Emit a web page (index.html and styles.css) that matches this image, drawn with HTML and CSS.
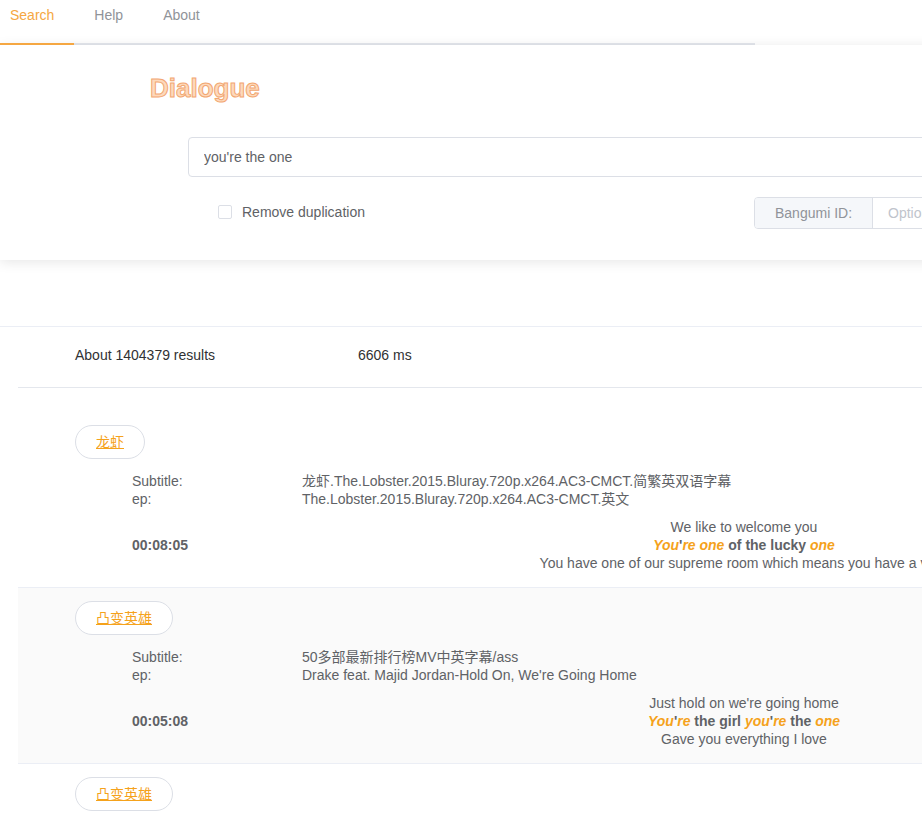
FILE: index.html
```html
<!DOCTYPE html>
<html lang="en">
<head>
  <meta charset="UTF-8">
  <title>Dialogue</title>
  <link rel="stylesheet" href="styles.css">
</head>
<body>
<div class="page">

  <nav class="tabs">
    <a class="tab active">Search</a>
    <a class="tab">Help</a>
    <a class="tab">About</a>
  </nav>

  <section class="search-card">
    <h1 class="brand">Dialogue</h1>
    <input class="query" type="text" value="you're the one">
    <div class="options">
      <label class="check"><span class="box"></span>Remove duplication</label>
      <div class="bangumi">
        <span class="prefix">Bangumi ID:</span>
        <input type="text" placeholder="Optional">
      </div>
    </div>
  </section>

  <section class="results">
    <div class="stats">
      <span class="count">About 1404379 results</span>
      <span class="time">6606 ms</span>
    </div>

    <article class="result">
      <a class="title">龙虾</a>
      <div class="info">
        <span>Subtitle:</span><span>龙虾.The.Lobster.2015.Bluray.720p.x264.AC3-CMCT.简繁英双语字幕</span>
        <span>ep:</span><span>The.Lobster.2015.Bluray.720p.x264.AC3-CMCT.英文</span>
      </div>
      <div class="line">
        <span class="stamp">00:08:05</span>
        <div class="dialogue">
          <p>We like to welcome you</p>
          <p class="hit"><em>You</em>'<em>re</em> <em>one</em> of the lucky <em>one</em></p>
          <p>You have one of our supreme room which means you have a view</p>
        </div>
      </div>
    </article>

    <article class="result odd">
      <a class="title">凸变英雄</a>
      <div class="info">
        <span>Subtitle:</span><span>50多部最新排行榜MV中英字幕/ass</span>
        <span>ep:</span><span>Drake feat. Majid Jordan-Hold On, We're Going Home</span>
      </div>
      <div class="line">
        <span class="stamp">00:05:08</span>
        <div class="dialogue">
          <p>Just hold on we're going home</p>
          <p class="hit"><em>You</em>'<em>re</em> the girl <em>you</em>'<em>re</em> the <em>one</em></p>
          <p>Gave you everything I love</p>
        </div>
      </div>
    </article>

    <article class="result">
      <a class="title">凸变英雄</a>
      <div class="info">
        <span>Subtitle:</span><span>50多部最新排行榜MV中英字幕/ass</span>
        <span>ep:</span><span>Drake feat. Majid Jordan-Hold On, We're Going Home</span>
      </div>
    </article>
  </section>

</div>
</body>
</html>
```

FILE: styles.css
```css
html, body { overflow: hidden; }
body { margin: 0; font-family: "Liberation Sans", "Noto Sans CJK SC", sans-serif; font-size: 14px; color: #606266; background: #fff; }
.page { width: 1488px; }

.tabs { display: flex; width: 755px; border-bottom: 2px solid #e4e7ed; }
.tab { padding: 0 20px 13px; line-height: 30px; color: #909399; margin-bottom: -2px; border-bottom: 2px solid transparent; }
.tab:first-child { padding-left: 10px; }
.tab.active { color: #f5a742; border-bottom-color: #f5a742; }

.search-card { padding: 28px 0 31px; box-shadow: 0 2px 12px 0 rgba(0, 0, 0, 0.1); background: #fff; }
.brand { margin: 0 0 34px 150px; font-size: 26px; line-height: 30px; font-weight: bold; color: #fdd9bc; -webkit-text-stroke: 1px #f2a772; }
.query { display: block; box-sizing: border-box; margin-left: 188px; width: 1112px; height: 40px; padding: 0 15px; border: 1px solid #dcdfe6; border-radius: 4px; font: inherit; color: #606266; outline: none; }
.options { display: grid; grid-template-columns: 536px 544px; align-items: center; margin: 20px 0 0 218px; }
.check { display: flex; align-items: center; gap: 10px; color: #606266; margin-top: -2px; }
.box { width: 12px; height: 12px; border: 1px solid #dcdfe6; border-radius: 2px; background: #fff; }
.bangumi { display: flex; box-sizing: border-box; height: 32px; border: 1px solid #dcdfe6; border-radius: 4px; overflow: hidden; }
.prefix { display: flex; align-items: center; padding: 0 20px; background: #f5f7fa; color: #909399; border-right: 1px solid #dcdfe6; }
.bangumi input { flex: 1; border: none; padding: 0 15px; font: inherit; outline: none; }
.bangumi input::placeholder { color: #c0c4cc; }

.results { margin-top: 66px; border-top: 1px solid #ebeef5; }
.stats { display: flex; margin-left: 18px; padding: 19px 0 0 57px; height: 41px; line-height: 18px; border-bottom: 1px solid #e4e7ed; color: #303133; }
.count { width: 283px; }

.result { margin: 0 0 0 18px; padding: 13px 0 15px 57px; border-bottom: 1px solid #ebeef5; }
.results .result:first-of-type { margin-top: 24px; }
.result.odd { background: #fafafa; }
.title { display: inline-block; height: 32px; line-height: 32px; padding: 0 20px; border: 1px solid #dcdfe6; border-radius: 17px; background: #fff; color: #f5a21b; text-decoration: underline; }
.info { display: grid; grid-template-columns: 170px auto; margin: 13px 0 0 57px; line-height: 18px; }
.line { display: grid; grid-template-columns: 170px 884px; align-items: center; margin: 10px 0 0 57px; }
.stamp { font-weight: bold; }
.dialogue { text-align: center; white-space: nowrap; }
.dialogue p { margin: 0; line-height: 18px; }
.hit { font-weight: bold; }
.hit em { color: #f5a21b; }
```
